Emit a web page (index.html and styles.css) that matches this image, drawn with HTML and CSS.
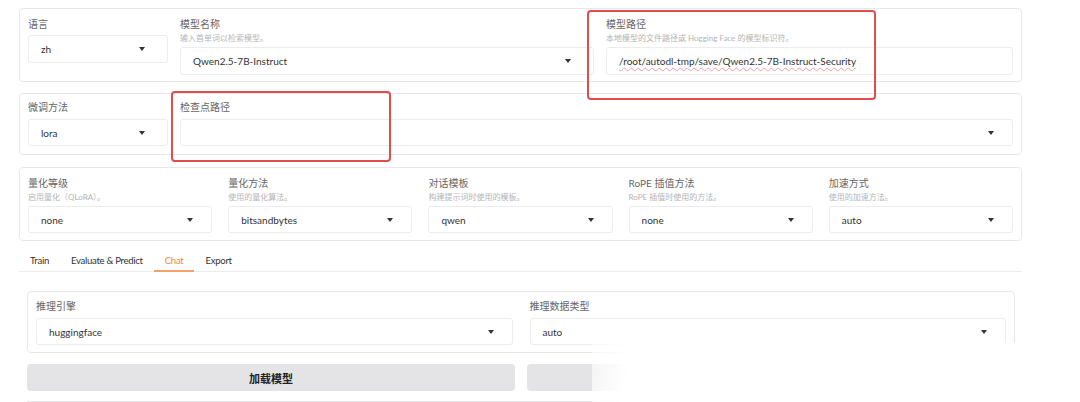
FILE: index.html
```html
<!DOCTYPE html>
<html>
<head>
    <title>LLaMA Board</title>
    <link rel="stylesheet" href="styles.css">
</head>
<body>
<div class="page">

    <div class="panel row1">
        <div class="field f-lang">
            <div class="label">语言</div>
            <div class="box select"><span>zh</span><i class="caret"></i></div>
        </div>
        <div class="field f-name">
            <div class="label">模型名称</div>
            <div class="hint">输入首单词以检索模型。</div>
            <div class="box select"><span>Qwen2.5-7B-Instruct</span><i class="caret"></i></div>
        </div>
        <div class="field f-path">
            <div class="label">模型路径</div>
            <div class="hint">本地模型的文件路径或 Hugging Face 的模型标识符。</div>
            <div class="box"><span class="squiggle">/root/autodl-tmp/save/Qwen2.5-7B-Instruct-Security</span></div>
        </div>
    </div>

    <div class="panel row2">
        <div class="field f-lang">
            <div class="label">微调方法</div>
            <div class="box select"><span>lora</span><i class="caret"></i></div>
        </div>
        <div class="field f-ckpt">
            <div class="label">检查点路径</div>
            <div class="box select"><span></span><i class="caret"></i></div>
        </div>
    </div>

    <div class="panel row3">
        <div class="field">
            <div class="label">量化等级</div>
            <div class="hint">启用量化（QLoRA）。</div>
            <div class="box select"><span>none</span><i class="caret"></i></div>
        </div>
        <div class="field">
            <div class="label">量化方法</div>
            <div class="hint">使用的量化算法。</div>
            <div class="box select"><span>bitsandbytes</span><i class="caret"></i></div>
        </div>
        <div class="field">
            <div class="label">对话模板</div>
            <div class="hint">构建提示词时使用的模板。</div>
            <div class="box select"><span>qwen</span><i class="caret"></i></div>
        </div>
        <div class="field">
            <div class="label">RoPE 插值方法</div>
            <div class="hint">RoPE 插值时使用的方法。</div>
            <div class="box select"><span>none</span><i class="caret"></i></div>
        </div>
        <div class="field">
            <div class="label">加速方式</div>
            <div class="hint">使用的加速方法。</div>
            <div class="box select"><span>auto</span><i class="caret"></i></div>
        </div>
    </div>

    <div class="tabs">
        <div class="tab">Train</div>
        <div class="tab">Evaluate &amp; Predict</div>
        <div class="tab active">Chat</div>
        <div class="tab">Export</div>
    </div>

    <div class="tabbody">
        <div class="panel chat">
            <div class="field">
                <div class="label">推理引擎</div>
                <div class="box select"><span>huggingface</span><i class="caret"></i></div>
            </div>
            <div class="field">
                <div class="label">推理数据类型</div>
                <div class="box select"><span>auto</span><i class="caret"></i></div>
            </div>
        </div>
        <div class="buttons">
            <div class="btn">加载模型</div>
            <div class="btn">卸载模型</div>
        </div>
        <div class="next"></div>
    </div>

</div>

<!-- annotations drawn over the screenshot -->
<div class="mark mark-path"></div>
<div class="mark mark-ckpt"></div>
<div class="fade"></div>
</body>
</html>
```

FILE: styles.css
```css
html,
body {
    margin: 0;
    height: 402px;
    background: #fff;
    font-family: "Source Sans Pro", Lato, "Noto Sans CJK SC", sans-serif;
    color: #333;
    overflow: hidden;
}

.page {
    width: 1003px;
    padding: 8px 0 0 19px;
}

.panel {
    border: 1px solid #e8e8ea;
    border-radius: 4px;
    background: #fff;
    box-sizing: border-box;
    display: flex;
}

.label {
    font-size: 10px;
    line-height: 14px;
    color: #666;
}

.hint {
    font-size: 8px;
    line-height: 12px;
    color: #b4b4b4;
    margin-top: 1px;
}

.box {
    height: 28px;
    border: 1px solid #ececee;
    border-radius: 3px;
    box-sizing: border-box;
    display: flex;
    align-items: center;
    padding: 0 12px;
    font-size: 10px;
    color: #333;
    margin-top: 4px;
}

.hint + .box {
    margin-top: 3px;
}

.box span {
    flex: 1;
    white-space: nowrap;
}

.caret {
    width: 0;
    height: 0;
    border-left: 3px solid transparent;
    border-right: 3px solid transparent;
    border-top: 4px solid #333;
    margin-right: 6px;
}

.squiggle {
    text-decoration: underline wavy #e8a0a0 1px;
    text-underline-offset: 2px;
}

/* row 1 */
.row1 {
    height: 74px;
    padding: 8px 8px 0 8px;
    gap: 12px;
}

.row1 .caret {
    margin-right: 10px;
}

.f-lang {
    width: 140px;
    flex: none;
}

.f-lang .caret {
    margin-right: 10px;
}

.f-name {
    width: 414px;
}

.f-path {
    flex: 1;
}

/* row 2 */
.row2 {
    height: 62px;
    margin-top: 11px;
    padding: 6px 8px 0 8px;
    gap: 12px;
}

.row2 .box {
    margin-top: 5px;
    height: 27px;
}

.f-ckpt {
    flex: 1;
}

/* row 3 */
.row3 {
    height: 74px;
    margin-top: 12px;
    padding: 8px 8px 0 8px;
    gap: 16px;
}

.row3 .field {
    flex: 1;
}

.row3 .box {
    height: 27px;
}

/* tabs */
.tabs {
    display: flex;
    margin-top: 8px;
    border-bottom: 1px solid #ececee;
    font-size: 9.6px;
    letter-spacing: -0.3px;
}

.tab {
    padding: 5px 11px 4px;
    line-height: 13px;
    color: #333;
}

.tab.active {
    color: #f08a3c;
    border-bottom: 2px solid #f5a06a;
    margin-bottom: -1px;
    padding-bottom: 3px;
}

.tabbody {
    padding: 19px 7px 0 8px;
}

.chat {
    height: 62px;
    padding: 7px 8px 0 8px;
    gap: 17px;
}

.chat .field {
    flex: 1;
}

.chat .box {
    margin-top: 5px;
    height: 27px;
}

.buttons {
    display: flex;
    gap: 12px;
    margin-top: 11px;
}

.btn {
    flex: 1;
    height: 27px;
    border-radius: 4px;
    background: #e4e4e7;
    display: flex;
    align-items: center;
    justify-content: center;
    font-size: 11px;
    font-weight: bold;
    color: #222;
}

.next {
    height: 1px;
    margin-top: 10px;
    border-top: 1px solid #e8e8ea;
}

/* red annotation boxes */
.mark {
    position: absolute;
    border: 2px solid #e24c4b;
    border-radius: 4px;
}

.mark-path {
    left: 587px;
    top: 10px;
    width: 285px;
    height: 86px;
}

.mark-ckpt {
    left: 171px;
    top: 91px;
    width: 216px;
    height: 67px;
}

/* washed-out corner */
.fade {
    position: absolute;
    left: 592px;
    top: 343px;
    right: 0;
    bottom: 0;
    background: linear-gradient(100deg, rgba(255,255,255,0.6) 0, #fff 40px);
}
```
